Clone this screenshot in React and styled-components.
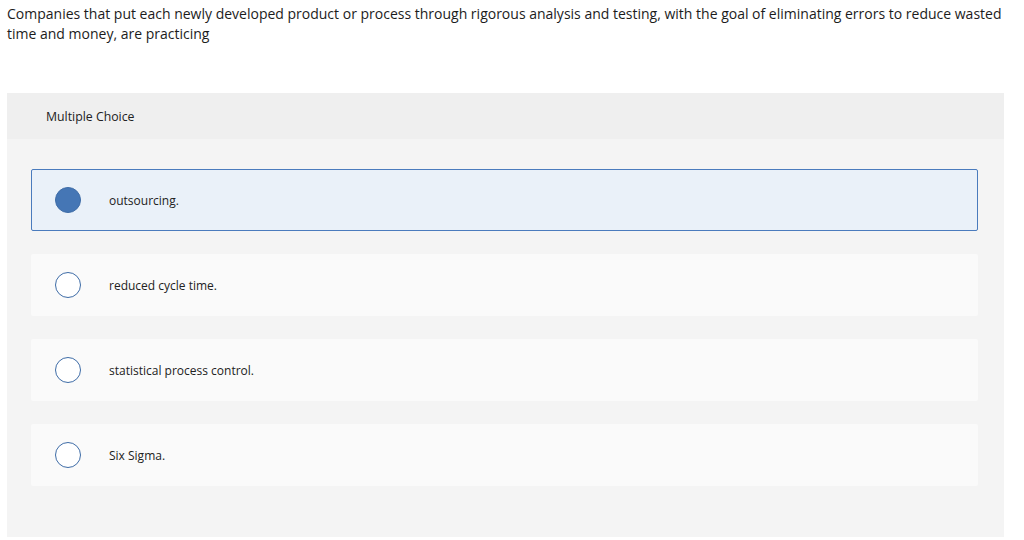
import React from "react"
import styled, { createGlobalStyle } from 'styled-components';

const GlobalStyle = createGlobalStyle`
  body {
    margin: 0;
    background: #fff;
    font-family: "Open Sans", Lato, sans-serif;
    color: #1a1a1a;
  }
`

const options = [
  'outsourcing.',
  'reduced cycle time.',
  'statistical process control.',
  'Six Sigma.',
]

const App = () => {
  const selected = 0

  return (
    <Page>
      <GlobalStyle />
      <Question>
        Companies that put each newly developed product or process through rigorous analysis and testing, with the goal of eliminating errors to reduce wasted time and money, are practicing
      </Question>
      <Panel>
        <PanelHeader>Multiple Choice</PanelHeader>
        <Choices>
          {options.map((text, i) => (
            <Choice key={text} $selected={i === selected}>
              <Radio $selected={i === selected} />
              <ChoiceText>{text}</ChoiceText>
            </Choice>
          ))}
        </Choices>
      </Panel>
    </Page>
  )
}

export default App

const Page = styled.div`
  padding: 4px 20px 0 7px;
`

const Question = styled.p`
  margin: 0;
  max-width: 1000px;
  font-size: 14px;
  line-height: 19.5px;
  color: #1c1c1c;
`

const Panel = styled.section`
  margin-top: 50px;
  background: #f4f4f4;
  padding-bottom: 51px;
`

const PanelHeader = styled.header`
  background: #efefef;
  height: 46px;
  display: flex;
  align-items: center;
  padding-left: 39px;
  font-size: 12.3px;
  color: #222;
`

const Choices = styled.div`
  display: flex;
  flex-direction: column;
  gap: 23px;
  padding: 30px 26px 0 24px;
`

const Choice = styled.div`
  height: 62px;
  box-sizing: border-box;
  display: flex;
  align-items: center;
  padding-left: 23px;
  border-radius: 2px;
  background: ${props => props.$selected ? '#eaf1f9' : '#fafafa'};
  border: 1px solid ${props => props.$selected ? '#4a7bbd' : 'transparent'};
`

const Radio = styled.span`
  width: 26px;
  height: 26px;
  box-sizing: border-box;
  border-radius: 50%;
  border: 1.5px solid #3e6ca7;
  background: ${props => props.$selected ? '#4576b5' : '#fff'};
  flex-shrink: 0;
`

const ChoiceText = styled.span`
  margin-left: 28px;
  font-size: 12px;
  color: #222;
`
